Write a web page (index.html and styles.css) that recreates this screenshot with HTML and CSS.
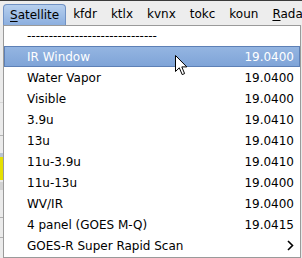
FILE: index.html
```html
<!DOCTYPE html>
<html>
<head>
<meta charset="utf-8">
<link rel="stylesheet" href="styles.css">
</head>
<body>
<div class="menubar">
  <div class="mitem active"><u>S</u>atellite</div>
  <div class="mitem">kfdr</div>
  <div class="mitem">ktlx</div>
  <div class="mitem">kvnx</div>
  <div class="mitem">tokc</div>
  <div class="mitem">koun</div>
  <div class="mitem"><u>R</u>adar</div>
</div>
<div class="below">
  <div class="behind">
    <div class="b b1"></div>
    <div class="b b2"></div>
    <div class="b b3"></div>
    <div class="b yellow"></div>
    <div class="b b4"></div>
    <div class="b b5"></div>
    <div class="b b6"></div>
  </div>
  <div class="menu">
    <div class="sep">------------------------------</div>
    <div class="row sel"><span>IR Window</span><span>19.0400</span></div>
    <div class="row"><span>Water Vapor</span><span>19.0400</span></div>
    <div class="row"><span>Visible</span><span>19.0400</span></div>
    <div class="row"><span>3.9u</span><span>19.0410</span></div>
    <div class="row"><span>13u</span><span>19.0410</span></div>
    <div class="row"><span>11u-3.9u</span><span>19.0410</span></div>
    <div class="row"><span>11u-13u</span><span>19.0400</span></div>
    <div class="row"><span>WV/IR</span><span>19.0400</span></div>
    <div class="row"><span>4 panel (GOES M-Q)</span><span>19.0415</span></div>
    <div class="row"><span>GOES-R Super Rapid Scan</span><svg class="chev" width="7" height="11" viewBox="0 0 7 11"><polyline points="1,1 5.5,5.5 1,10" fill="none" stroke="#000" stroke-width="1.6"/></svg></div>
  </div>
</div>
<svg class="cursor" width="13" height="21" viewBox="0 0 13 21"><path d="M0.5 0.5 L0.5 16.5 L4.3 12.8 L7.2 19.6 L9.6 18.6 L6.8 11.9 L11.8 11.9 Z" fill="#fff" stroke="#000" stroke-width="1" stroke-linejoin="round"/></svg>
</body>
</html>
```

FILE: styles.css
```css
html, body {
  margin: 0;
  padding: 0;
}
body {
  width: 302px;
  height: 258px;
  overflow: hidden;
  background: #e9e9e9;
  font-family: "DejaVu Sans", sans-serif;
  font-size: 12px;
  color: #000;
  position: relative;
}
.menubar {
  display: flex;
  align-items: flex-end;
  height: 25px;
  box-sizing: border-box;
  border-top: 1px solid #3a3a3a;
  background: #ededed;
  padding-left: 3px;
  white-space: nowrap;
  overflow: hidden;
}
.mitem {
  padding: 0 7px;
  height: 21px;
  line-height: 21px;
  box-sizing: border-box;
  flex: none;
}
.mitem u {
  text-decoration: underline;
  text-underline-offset: 2px;
}
.mitem.active {
  padding: 0 6px;
  border: 1px solid #7192c4;
  border-bottom: none;
  border-radius: 4px 4px 0 0;
  line-height: 20px;
  background: linear-gradient(#b6cfee, #8cafdf);
}
.below {
  display: flex;
}
.behind {
  width: 3px;
  flex: none;
  height: 233px;
  position: relative;
  background: #ebebeb;
}
.b {
  position: absolute;
  left: 0;
  width: 3px;
  height: 1px;
  background: #c8c8c8;
}
.b1 { top: 77px; background: #d6d6d6; }
.b2 { top: 110px; background: #b4b4b4; }
.b3 { top: 128px; height: 4px; background: #b9c4d2; }
.yellow { top: 132px; height: 23px; background: #e6e000; }
.b4 { top: 157px; height: 8px; background: #d2d2d2; }
.b5 { top: 192px; background: #b0b0b0; }
.b6 { top: 212px; background: #b0b0b0; }
.menu {
  width: 298px;
  box-sizing: border-box;
  border: 1px solid #9a9a9a;
  background: #fff;
  flex: none;
}
.sep {
  height: 20px;
  line-height: 20px;
  padding-left: 23px;
  white-space: nowrap;
  overflow: hidden;
}
.row {
  height: 21px;
  display: flex;
  align-items: center;
  justify-content: space-between;
  padding: 0 6px 0 23px;
  box-sizing: border-box;
  white-space: nowrap;
}
.row.sel {
  border: 1px solid #5d80b6;
  padding: 0 5px 0 22px;
  background: linear-gradient(#94b5e1, #7fa4d8);
  color: #fff;
}
.chev {
  display: block;
}
.cursor {
  position: absolute;
  left: 175px;
  top: 55px;
}
```
